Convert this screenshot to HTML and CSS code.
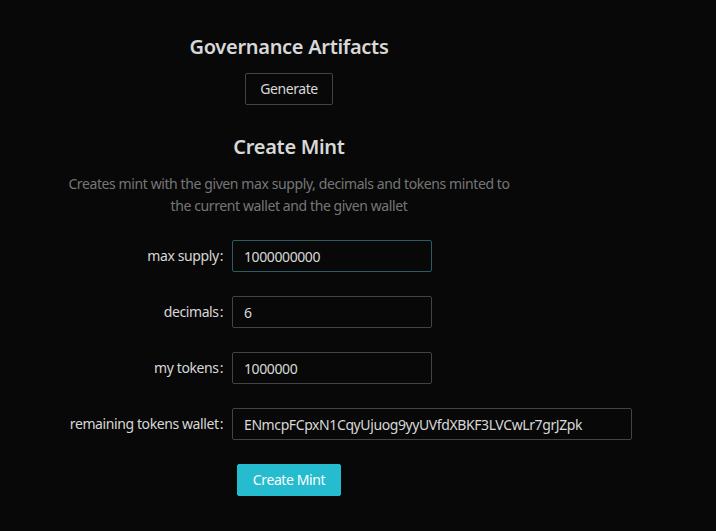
FILE: index.html
```html
<!DOCTYPE html>
<html>
<head>
<meta charset="utf-8">
<link rel="stylesheet" href="styles.css">
</head>
<body>
<main class="col">
  <section class="block">
    <h2 class="title">Governance Artifacts</h2>
    <button class="btn">Generate</button>
  </section>
  <section class="block mint">
    <h2 class="title">Create Mint</h2>
    <p class="desc">Creates mint with the given max supply, decimals and tokens minted to<br>the current wallet and the given wallet</p>
    <form class="form">
      <label class="lbl">max supply</label>
      <div class="ctl"><input class="inp focus" value="1000000000"></div>
      <label class="lbl">decimals</label>
      <div class="ctl"><input class="inp" value="6"></div>
      <label class="lbl">my tokens</label>
      <div class="ctl"><input class="inp" value="1000000"></div>
      <label class="lbl">remaining tokens wallet</label>
      <div class="ctl"><input class="inp wide" value="ENmcpFCpxN1CqyUjuog9yyUVfdXBKF3LVCwLr7grJZpk"></div>
      <div></div>
      <div class="ctl"><button type="button" class="btn primary">Create Mint</button></div>
    </form>
  </section>
</main>
</body>
</html>
```
FILE: styles.css
```css
html, body {
  margin: 0;
  padding: 0;
  background: #080808;
  color: rgba(255,255,255,0.85);
  font-family: "Noto Sans", "Open Sans", sans-serif;
  font-size: 14px;
  letter-spacing: -0.4px;
}
.col {
  width: 578px;
  padding-top: 33px;
  text-align: center;
}
.block { display: flex; flex-direction: column; align-items: center; }
.title {
  margin: 0;
  font-size: 20px;
  line-height: 28px;
  font-weight: 600;
  letter-spacing: -0.3px;
  color: rgba(255,255,255,0.85);
}
.btn {
  margin-top: 12px;
  height: 32px;
  padding: 4px 14px;
  background: transparent;
  border: 1px solid #434343;
  border-radius: 2px;
  color: rgba(255,255,255,0.85);
  font-family: inherit;
  font-size: 14px;
  letter-spacing: inherit;
  line-height: 22px;
  white-space: nowrap;
}
.mint { margin-top: 28px; }
.desc {
  margin: 12px 0 0;
  line-height: 22px;
  color: rgba(255,255,255,0.45);
}
.form {
  margin-top: 23px;
  align-self: stretch;
  display: grid;
  grid-template-columns: 226px 1fr;
  column-gap: 6px;
  row-gap: 24px;
  text-align: left;
}
.lbl {
  text-align: right;
  line-height: 32px;
}
.lbl::after { content: ":"; margin-left: 1px; margin-right: 3px; }
.ctl { display: flex; }
.inp {
  box-sizing: border-box;
  width: 200px;
  height: 32px;
  padding: 4px 11px;
  background: transparent;
  border: 1px solid #434343;
  border-radius: 2px;
  color: rgba(255,255,255,0.85);
  font-family: inherit;
  font-size: 14px;
  letter-spacing: inherit;
  outline: none;
}
.inp.focus { border-color: #2c5b63; }
.inp.wide { width: 400px; }
.btn.primary {
  margin-top: 0;
  margin-left: 5px;
  width: 104px;
  padding: 4px 0;
  background: #26bccf;
  border-color: #26bccf;
  color: #fff;
}
```
